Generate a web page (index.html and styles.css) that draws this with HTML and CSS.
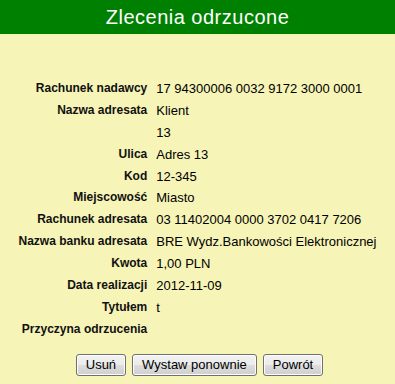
FILE: index.html
```html
<!DOCTYPE html>
<html lang="pl">
<head>
<meta charset="utf-8">
<title>Zlecenia odrzucone</title>
<link rel="stylesheet" href="styles.css">
</head>
<body>
<div class="header">Zlecenia odrzucone</div>
<div class="details">
  <div class="lbl">Rachunek nadawcy</div><div class="val">17 94300006 0032 9172 3000 0001</div>
  <div class="lbl">Nazwa adresata</div><div class="val">Klient</div>
  <div class="lbl"></div><div class="val">13</div>
  <div class="lbl">Ulica</div><div class="val">Adres 13</div>
  <div class="lbl">Kod</div><div class="val">12-345</div>
  <div class="lbl">Miejscowość</div><div class="val">Miasto</div>
  <div class="lbl">Rachunek adresata</div><div class="val">03 11402004 0000 3702 0417 7206</div>
  <div class="lbl">Nazwa banku adresata</div><div class="val">BRE Wydz.Bankowości Elektronicznej</div>
  <div class="lbl">Kwota</div><div class="val">1,00 PLN</div>
  <div class="lbl">Data realizacji</div><div class="val">2012-11-09</div>
  <div class="lbl">Tytułem</div><div class="val">t</div>
  <div class="lbl">Przyczyna odrzucenia</div><div class="val"></div>
</div>
<div class="actions">
  <button class="btn" type="button">Usuń</button>
  <button class="btn" type="button">Wystaw ponownie</button>
  <button class="btn" type="button">Powrót</button>
</div>
</body>
</html>
```
FILE: styles.css
```css
html, body {
  margin: 0;
  padding: 0;
}
body {
  background: #f6f4b6;
  font-family: "Liberation Sans", Arial, sans-serif;
  color: #000;
  width: 395px;
  height: 384px;
  overflow: hidden;
}
.header {
  background: #008000;
  color: #fff;
  height: 34px;
  line-height: 34px;
  text-align: center;
  font-size: 20px;
  letter-spacing: 0.5px;
}
.details {
  display: grid;
  grid-template-columns: auto auto;
  justify-content: center;
  column-gap: 9px;
  margin-top: 44px;
  margin-left: 0;
}
.lbl, .val {
  height: 21.9px;
  line-height: 21.9px;
  white-space: nowrap;
}
.lbl {
  text-align: right;
  font-weight: bold;
  font-size: 12px;
  color: #111;
}
.val {
  font-size: 13px;
}
.actions {
  display: flex;
  justify-content: center;
  gap: 6px;
  margin-top: 13px;
  padding-left: 4px;
}
.btn {
  font-family: "Liberation Sans", Arial, sans-serif;
  font-size: 13px;
  color: #000;
  height: 22px;
  padding: 0 9px;
  border: 1px solid #707070;
  border-radius: 3px;
  background: linear-gradient(#f2f2f2 0%, #ebebeb 50%, #dddddd 51%, #cfcfcf 100%);
  box-shadow: inset 0 0 0 1px #fcfcfc;
}
```
